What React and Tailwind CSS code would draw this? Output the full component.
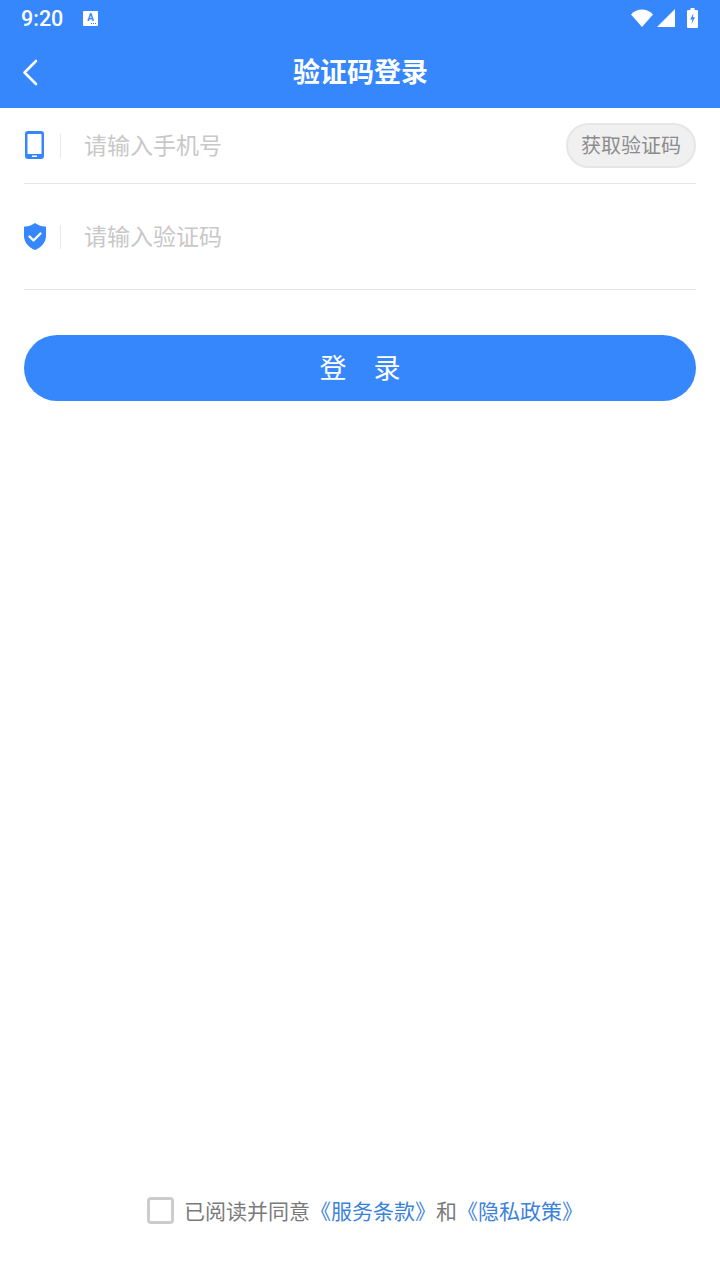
const cjk = { fontFamily: '"Noto Sans CJK SC", "Noto Sans", sans-serif' };

function StatusBar() {
  return (
    <div className="h-9 flex items-center pl-[21px] pr-[22px] text-white">
      <span className="text-[21.5px] font-medium leading-none mt-[1px]" style={{ fontFamily: 'Roboto, sans-serif' }}>9:20</span>
      <svg className="ml-[20px]" width="15" height="15" viewBox="0 0 15 15">
        <rect width="15" height="15" rx="1" fill="#fff" />
        <text x="7.5" y="10" textAnchor="middle" fontSize="10" fontWeight="700" fill="#3686fc" fontFamily="Roboto, sans-serif">A</text>
        <path d="M8 12.5h1M10 12.5h1M12 12.5h1" stroke="#3686fc" strokeWidth="1" />
      </svg>
      <div className="ml-auto flex items-center">
        <svg width="22" height="18" viewBox="0 0 22 18">
          <path d="M0 5.500C3 2 7 0.500 11 0.500s8 1.500 11 5L11 18z" fill="#fff" />
        </svg>
        <svg className="ml-[4px]" width="18" height="18" viewBox="0 0 18 18">
          <path d="M18 0v18H0z" fill="#fff" />
        </svg>
        <svg className="ml-[12px]" width="11" height="20" viewBox="0 0 11 20">
          <path d="M3.500 0h4v2H10a1 1 0 0 1 1 1v16a1 1 0 0 1-1 1H1a1 1 0 0 1-1-1V3a1 1 0 0 1 1-1h2.500z" fill="#fff" />
          <path d="M6.500 5 3.200 11.500h2.200L4.600 16 8 9.200H5.800z" fill="#3686fc" />
        </svg>
      </div>
    </div>
  );
}

function Divider() {
  return <div className="w-px h-6 bg-[#e8e8e8]" />;
}

export default function App() {
  return (
    <div className="w-[720px] h-[1280px] bg-white flex flex-col" style={cjk}>
      <header className="bg-[#3686fc] h-[108px] flex flex-col">
        <StatusBar />
        <div className="h-[72px] relative flex items-center justify-center">
          <svg className="absolute left-[22px] top-[23px]" width="16" height="27" viewBox="0 0 16 27" fill="none">
            <path d="M14 2 2.500 13.500 14 25" stroke="#fff" strokeWidth="2.600" strokeLinecap="round" strokeLinejoin="round" />
          </svg>
          <h1 className="text-[27px] font-bold text-white leading-none mt-[-3px] ml-[1px]">验证码登录</h1>
        </div>
      </header>

      <main className="px-6 flex-1 flex flex-col">
        <div className="h-[76px] flex items-center border-b border-[#e5e5e5]">
          <svg width="20" height="28" viewBox="0 0 20 28" className="mt-[-1px]">
            <rect x="1" y="0" width="19" height="28" rx="3" fill="#3686fc" />
            <rect x="3.500" y="3" width="14" height="20" fill="#fff" />
            <rect x="8" y="24.500" width="5" height="1.500" fill="#fff" />
          </svg>
          <div className="ml-[16px]"><Divider /></div>
          <span className="ml-[23px] text-[23px] leading-none text-[#c8c8c8] mt-[-2px]">请输入手机号</span>
          <button className="ml-auto w-[130px] h-[45px] rounded-full bg-[#f0f0f0] border-2 border-[#e6e6e6] text-[20px] leading-none pb-[2px] text-[#8c8c8c]">获取验证码</button>
        </div>

        <div className="h-[106px] flex items-start pt-[41px] border-b border-[#e5e5e5]">
          <svg width="22" height="27" viewBox="0 0 22 27" className="mt-[-2px]">
            <path d="M11 0c2.500 2 6 3.300 10 3.500 .5 0 1 .4 1 1V13c0 6.500-5 11.500-11 14C5 24.500 0 19.500 0 13V4.500c0-.6 .5-1 1-1C5 3.300 8.500 2 11 0z" fill="#3686fc" />
            <path d="M5.500 13.500 9.500 17.500 16.500 10.500" stroke="#fff" strokeWidth="2.400" fill="none" strokeLinecap="round" strokeLinejoin="round" />
          </svg>
          <div className="ml-[14px]"><Divider /></div>
          <span className="ml-[23px] text-[23px] leading-6 text-[#c8c8c8] mt-[-2px]">请输入验证码</span>
        </div>

        <button className="mt-[45px] h-[66px] rounded-full bg-[#3686fc] text-white text-[27px] leading-none pb-[4px]">登　录</button>

        <div className="mt-auto mb-[56px] pl-[10px] flex items-center justify-center text-[21px] leading-none">
          <span className="w-[27px] h-[27px] rounded-[4px] border-[3px] border-[#cccccc] mr-[10px]" />
          <span className="text-[#7a7a7a]">已阅读并同意</span>
          <span className="text-[#3b82d9]">《服务条款》</span>
          <span className="text-[#7a7a7a]">和</span>
          <span className="text-[#3b82d9]">《隐私政策》</span>
        </div>
      </main>
    </div>
  );
}
